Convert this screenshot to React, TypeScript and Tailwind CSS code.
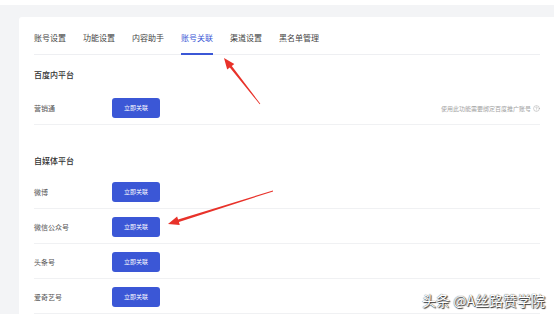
import React from 'react';
import { CircleHelp } from 'lucide-react';

const tabs = ['账号设置', '功能设置', '内容助手', '账号关联', '渠道设置', '黑名单管理'];
const mediaRows = ['微博', '微信公众号', '头条号', '爱奇艺号'];

// tapered red arrow, tail -> head
function arrowPoints(x1: number, y1: number, x2: number, y2: number) {
  const dx = x2 - x1;
  const dy = y2 - y1;
  const len = Math.sqrt(dx * dx + dy * dy);
  const ux = dx / len;
  const uy = dy / len;
  const px = -uy;
  const py = ux;
  const headLen = 11;
  const headW = 4.5;
  const bx = x2 - ux * headLen;
  const by = y2 - uy * headLen;
  const pts = [
    [x1 + px * 0.4, y1 + py * 0.4],
    [bx + px * 1.3, by + py * 1.3],
    [bx + px * headW, by + py * headW],
    [x2, y2],
    [bx - px * headW, by - py * headW],
    [bx - px * 1.3, by - py * 1.3],
    [x1 - px * 0.4, y1 - py * 0.4],
  ];
  return pts.map((p) => `${p[0].toFixed(1)},${p[1].toFixed(1)}`).join(' ');
}

const LinkButton: React.FC = () => (
  <button className="w-[48px] h-[20px] rounded-[3px] bg-[#3b57d6] text-white text-[6px] leading-none">
    立即关联
  </button>
);

const App: React.FC = () => {
  return (
    <div
      className="relative w-[554px] h-[314px] overflow-hidden bg-[#f3f4f6]"
      style={{ fontFamily: '"Noto Sans CJK SC", "Noto Sans", sans-serif' }}
    >
      <div className="h-[5px] bg-white" />
      <div className="pt-[12px] pl-[19px]">
        <div className="bg-white rounded-tl-[3px] pl-[15px] pr-[14px] h-[300px]">
          {/* Tabs */}
          <div className="flex gap-[17px] border-b border-[#eeeff2]">
            {tabs.map((tab) => (
              <div
                key={tab}
                className={`-mb-px pt-[16px] pb-[10px] border-b-2 text-[8px] leading-[10px] ${
                  tab === '账号关联' ? 'border-[#3b57d6] text-[#3b57d6]' : 'border-transparent text-[#444]'
                }`}
              >
                {tab}
              </div>
            ))}
          </div>

          {/* 百度内平台 */}
          <div className="pt-[15px] mb-[10px] text-[8px] leading-[10px] font-medium text-[#333]">百度内平台</div>
          <div className="flex items-center pt-[8px] pb-[6px] border-b border-[#f0f1f3]">
            <div className="w-[78px] text-[7px] text-[#555]">营销通</div>
            <LinkButton />
            <div className="ml-auto flex items-center gap-[2px] text-[6px] text-[#a3a3a3]">
              <span>使用此功能需要绑定百度推广账号</span>
              <CircleHelp size={7} strokeWidth={1.5} color="#9a9a9a" />
            </div>
          </div>

          {/* 自媒体平台 */}
          <div className="pt-[31px] mb-[8px] text-[8px] leading-[10px] font-medium text-[#333]">自媒体平台</div>
          {mediaRows.map((name) => (
            <div key={name} className="flex items-center pt-[8px] pb-[6px] border-b border-[#f0f1f3]">
              <div className="w-[78px] text-[7px] text-[#555]">{name}</div>
              <LinkButton />
            </div>
          ))}
        </div>
      </div>

      {/* annotation arrows */}
      <svg className="absolute inset-0 pointer-events-none" width={554} height={314}>
        <polygon points={arrowPoints(260, 104, 224, 58)} fill="#e8322a" />
        <polygon points={arrowPoints(273, 191, 168, 224)} fill="#e8322a" />
      </svg>

      {/* watermark */}
      <div className="absolute right-[9px] bottom-[7px] text-[14px] leading-none text-white [text-shadow:0_0_1px_#222,1px_1px_1px_#333]">
        头条 @A丝路赞学院
      </div>
    </div>
  );
};

export default App;
